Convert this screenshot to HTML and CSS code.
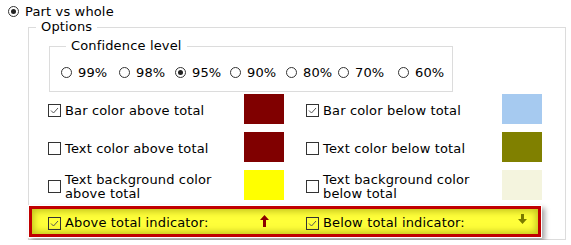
FILE: index.html
```html
<!DOCTYPE html>
<html>
<head>
<meta charset="utf-8">
<link rel="stylesheet" href="styles.css">
</head>
<body>
<div class="top-row">
  <span class="radio checked"></span><span class="lbl">Part vs whole</span>
</div>
<fieldset class="options">
  <legend>Options</legend>
  <fieldset class="confidence">
    <legend>Confidence level</legend>
    <div class="radio-row">
      <div class="ropt"><span class="radio"></span><span>99%</span></div>
      <div class="ropt"><span class="radio"></span><span>98%</span></div>
      <div class="ropt"><span class="radio checked"></span><span>95%</span></div>
      <div class="ropt"><span class="radio"></span><span>90%</span></div>
      <div class="ropt"><span class="radio"></span><span>80%</span></div>
      <div class="ropt"><span class="radio"></span><span>70%</span></div>
      <div class="ropt"><span class="radio"></span><span>60%</span></div>
    </div>
  </fieldset>
  <div class="grid">
    <div class="cell">
      <div class="check-lbl"><span class="cb"><svg viewBox="0 0 11 11" width="11" height="11"><path d="M2 5.5 L4.5 8 L9 3" fill="none" stroke="#555" stroke-width="1"/></svg></span><span class="txt">Bar color above total</span></div>
      <div class="swatch dark-red"></div>
    </div>
    <div class="cell">
      <div class="check-lbl"><span class="cb"><svg viewBox="0 0 11 11" width="11" height="11"><path d="M2 5.5 L4.5 8 L9 3" fill="none" stroke="#555" stroke-width="1"/></svg></span><span class="txt">Bar color below total</span></div>
      <div class="swatch sky"></div>
    </div>
    <div class="cell">
      <div class="check-lbl"><span class="cb"></span><span class="txt">Text color above total</span></div>
      <div class="swatch dark-red"></div>
    </div>
    <div class="cell">
      <div class="check-lbl"><span class="cb"></span><span class="txt">Text color below total</span></div>
      <div class="swatch olive"></div>
    </div>
    <div class="cell">
      <div class="check-lbl"><span class="cb"></span><span class="txt">Text background color above total</span></div>
      <div class="swatch yellow"></div>
    </div>
    <div class="cell">
      <div class="check-lbl"><span class="cb"></span><span class="txt">Text background color below total</span></div>
      <div class="swatch beige"></div>
    </div>
  </div>
  <div class="highlight">
    <div class="hl-grid">
      <div class="cell">
        <div class="check-lbl"><span class="cb clear"><svg viewBox="0 0 11 11" width="11" height="11"><path d="M2 5.5 L4.5 8 L9 3" fill="none" stroke="#555" stroke-width="1"/></svg></span><span class="txt">Above total indicator:</span></div>
        <div class="arrow-slot"><svg class="arrow-up" viewBox="0 0 9 12" width="9" height="12"><polygon points="4.5,0 9,5 6,5 6,12 3,12 3,5 0,5" fill="#8b0000"/></svg></div>
      </div>
      <div class="cell">
        <div class="check-lbl"><span class="cb clear"><svg viewBox="0 0 11 11" width="11" height="11"><path d="M2 5.5 L4.5 8 L9 3" fill="none" stroke="#555" stroke-width="1"/></svg></span><span class="txt">Below total indicator:</span></div>
        <div class="arrow-slot"><svg class="arrow-down" viewBox="0 0 9 10" width="9" height="10"><polygon points="3,0 6,0 6,5 9,5 4.5,10 0,5 3,5" fill="#7a7a00"/></svg></div>
      </div>
    </div>
  </div>
</fieldset>
</body>
</html>
```

FILE: styles.css
```css
* { box-sizing: border-box; }
body {
  margin: 0;
  padding: 3px 0 0 0;
  background: #fff;
  font-family: "DejaVu Sans", Verdana, sans-serif;
  font-size: 13px;
  letter-spacing: 0.15px;
  color: #000;
}
.top-row {
  display: flex;
  align-items: center;
  height: 16px;
  padding-left: 8px;
}
.top-row .lbl { margin-left: 6px; line-height: 16px; padding-top: 1px; }

.radio {
  display: inline-block;
  flex: none;
  width: 11px;
  height: 11px;
  border: 1px solid #333;
  border-radius: 50%;
  background: #fff;
  position: relative;
}
.radio.checked::after {
  content: "";
  position: absolute;
  left: 2px;
  top: 2px;
  width: 5px;
  height: 5px;
  border-radius: 50%;
  background: #222;
}

fieldset {
  border: 1px solid #dcdcdc;
  margin: 0;
  padding: 0;
  min-inline-size: 0;
}
legend {
  padding: 0 5px;
  line-height: 16px;
}
.options {
  margin-left: 28px;
  width: 538px;
}
.options > legend { margin-left: 7px; }

.confidence {
  margin: 3px 0 0 20px;
  width: 404px;
  padding: 0 0 11px 11px;
}
.confidence > legend { margin-left: 5px; }

.radio-row {
  display: flex;
  align-items: center;
  height: 16px;
  margin-top: 10px;
}
.ropt {
  display: flex;
  align-items: center;
  flex: none;
}
.ropt span:last-child { margin-left: 6px; line-height: 16px; padding-top: 1px; }
.ropt:nth-child(1) { width: 58px; }
.ropt:nth-child(2) { width: 56px; }
.ropt:nth-child(3) { width: 55px; }
.ropt:nth-child(4) { width: 56px; }
.ropt:nth-child(5) { width: 52px; }
.ropt:nth-child(6) { width: 60px; }

.grid {
  display: grid;
  grid-template-columns: 236px 236px;
  grid-auto-rows: 30px;
  column-gap: 22px;
  row-gap: 8px;
  margin: 2px 0 0 19px;
}
.cell {
  display: flex;
  align-items: center;
}
.check-lbl {
  flex: 1;
  display: flex;
  align-items: center;
  min-width: 0;
  padding-top: 3px;
}
.cb {
  flex: none;
  width: 13px;
  height: 13px;
  border: 1px solid #333;
  background: #fff;
  display: flex;
  align-items: center;
  justify-content: center;
}
.cb.clear { background: transparent; }
.cb svg { display: block; }
.txt {
  margin-left: 4px;
  line-height: 14px;
  padding-right: 10px;
}
.swatch {
  flex: none;
  width: 40px;
  height: 30px;
}
.dark-red { background: #800000; }
.sky { background: #a6caf0; }
.olive { background: #808000; }
.yellow { background: #ffff00; }
.beige { background: #f4f4de; }

.highlight {
  margin: 6px 0 2px 0;
  width: 512px;
  height: 31px;
  border: 3px solid #c00000;
  background: #ffff3a;
  box-shadow: inset 0 0 7px 2px rgba(140, 140, 0, 0.55), 0 0 0 1px #fff, 3px 3px 5px 1px rgba(0, 0, 0, 0.35);
  padding-left: 16px;
  display: flex;
  align-items: center;
}
.hl-grid {
  display: grid;
  grid-template-columns: 236px 236px;
  column-gap: 22px;
}
.arrow-slot {
  flex: none;
  width: 40px;
  display: flex;
  justify-content: center;
}
.arrow-up { display: block; margin-top: -2px; }
.arrow-down { display: block; margin-top: -6px; }
```
